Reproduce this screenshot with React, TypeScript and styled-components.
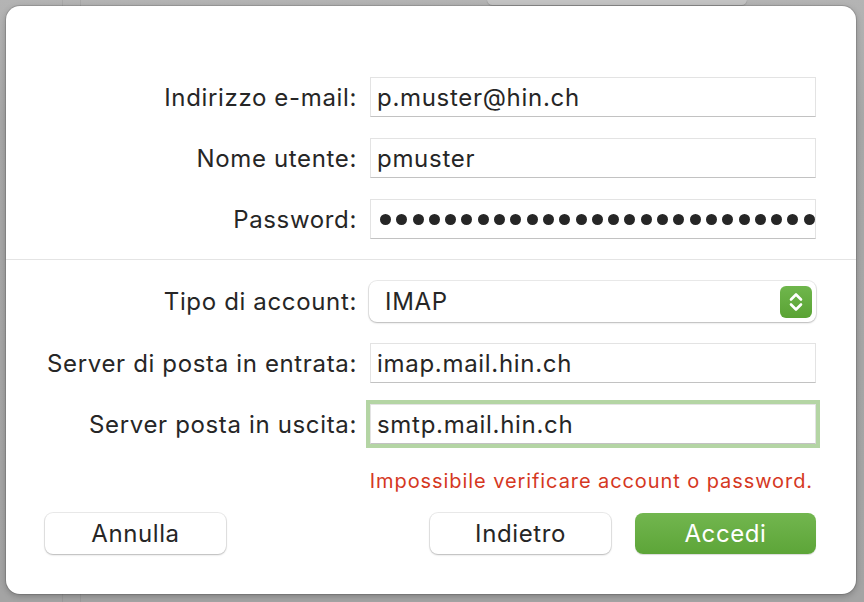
import styled, { createGlobalStyle } from "styled-components";

const GlobalStyle = createGlobalStyle`
  html, body {
    margin: 0;
    padding: 0;
    background: #a9a9a9;
  }
  * {
    box-sizing: border-box;
  }
`;

const rowsTop = [
  { label: "Indirizzo e-mail:", value: "p.muster@hin.ch" },
  { label: "Nome utente:", value: "pmuster" },
];

export default function App() {
  let dots = Array.from({ length: 28 });
  return (
    <Desktop>
      <GlobalStyle />
      <BehindTab />
      <BehindLine style={{ left: 62 }} />
      <BehindLine style={{ left: 80 }} />
      <Sheet>
        <FormGrid $top={71}>
          {rowsTop.map((row) => (
            <>
              <Label key={row.label + "l"}>{row.label}</Label>
              <TextField key={row.label + "f"}>{row.value}</TextField>
            </>
          ))}
          <Label>Password:</Label>
          <TextField>
            <Dots>
              {dots.map((_, i) => (
                <Dot key={i} />
              ))}
            </Dots>
          </TextField>
        </FormGrid>
        <Separator />
        <FormGrid $top={21}>
          <Label>Tipo di account:</Label>
          <Popup>
            <span>IMAP</span>
            <Stepper>
              <svg width="32" height="32" viewBox="0 0 32 32" fill="none">
                <path
                  d="M11 13.5 L16 8.5 L21 13.5"
                  stroke="#fff"
                  strokeWidth="2.6"
                  strokeLinecap="round"
                  strokeLinejoin="round"
                />
                <path
                  d="M11 18.5 L16 23.5 L21 18.5"
                  stroke="#fff"
                  strokeWidth="2.6"
                  strokeLinecap="round"
                  strokeLinejoin="round"
                />
              </svg>
            </Stepper>
          </Popup>
          <Label>Server di posta in entrata:</Label>
          <TextField>imap.mail.hin.ch</TextField>
          <Label>Server posta in uscita:</Label>
          <TextField $focused>smtp.mail.hin.ch</TextField>
        </FormGrid>
        <ErrorText>Impossibile verificare account o password.</ErrorText>
        <ButtonBar>
          <Button>Annulla</Button>
          <RightButtons>
            <Button>Indietro</Button>
            <Button $primary>Accedi</Button>
          </RightButtons>
        </ButtonBar>
      </Sheet>
    </Desktop>
  );
}

const Desktop = styled.div`
  position: relative;
  width: 864px;
  height: 602px;
  padding: 6px 8px 8px 6px;
  background: linear-gradient(#b4b4b4, #a8a8a8 20%, #a4a4a4);
  font-family: Inter, "Noto Sans", sans-serif;
  color: #262626;
  overflow: hidden;
`;

const BehindTab = styled.div`
  position: absolute;
  left: 487px;
  top: -6px;
  width: 260px;
  height: 11px;
  border-radius: 6px;
  background: #c3c3c3;
  box-shadow: 0 1px 1px rgba(0, 0, 0, 0.15);
`;

const BehindLine = styled.div`
  position: absolute;
  top: 0;
  bottom: 0;
  width: 1px;
  background: rgba(0, 0, 0, 0.06);
`;

const Sheet = styled.div`
  position: relative;
  width: 850px;
  height: 588px;
  background: #fff;
  border-radius: 14px;
  box-shadow: 0 0 0 1px rgba(0, 0, 0, 0.12), 0 2px 6px rgba(0, 0, 0, 0.25);
  display: flex;
  flex-direction: column;
`;

const FormGrid = styled.div<{ $top: number }>`
  display: grid;
  grid-template-columns: 351px 446px;
  column-gap: 13px;
  row-gap: 21px;
  align-items: center;
  padding-top: ${(p) => p.$top}px;
`;

const Label = styled.div`
  text-align: right;
  font-size: 24px;
  letter-spacing: 0.65px;
  white-space: nowrap;
  color: #262626;
`;

const TextField = styled.div<{ $focused?: boolean }>`
  height: 40px;
  display: flex;
  align-items: center;
  padding: 0 6px;
  font-size: 24px;
  letter-spacing: 0.7px;
  background: #fff;
  border: 1px solid #e3e3e3;
  border-bottom-color: #c2c2c2;
  overflow: hidden;
  white-space: nowrap;
  box-shadow: ${(p) => (p.$focused ? "0 0 0 4px #b4d5a4" : "none")};
`;

const Dots = styled.div`
  display: flex;
  gap: 5.3px;
  padding-left: 3px;
`;

const Dot = styled.span`
  flex: none;
  width: 11px;
  height: 11px;
  border-radius: 50%;
  background: #262626;
`;

const Separator = styled.div`
  margin-top: 20px;
  height: 1px;
  background: #e4e4e4;
`;

const Popup = styled.div`
  height: 41px;
  margin-left: -1px;
  display: flex;
  align-items: center;
  justify-content: space-between;
  padding: 0 4px 0 16px;
  font-size: 24px;
  letter-spacing: 0.7px;
  background: #fff;
  border-radius: 8px;
  box-shadow: 0 0 0 1px rgba(0, 0, 0, 0.08), 0 1px 2px rgba(0, 0, 0, 0.22);
`;

const Stepper = styled.div`
  width: 32px;
  height: 32px;
  border-radius: 6px;
  background: linear-gradient(#6fb64c, #5aa334);
  display: flex;
  align-items: center;
  justify-content: center;
`;

const ErrorText = styled.div`
  margin-top: 25px;
  padding-right: 43px;
  text-align: right;
  font-size: 20px;
  letter-spacing: 0.92px;
  line-height: 24px;
  color: #d5381f;
`;

const ButtonBar = styled.div`
  margin-top: 20px;
  padding: 0 40px 0 39px;
  display: flex;
  justify-content: space-between;
`;

const RightButtons = styled.div`
  display: flex;
  gap: 24px;
`;

const Button = styled.button<{ $primary?: boolean }>`
  width: 181px;
  height: 41px;
  border: none;
  border-radius: 8px;
  font-family: Inter, "Noto Sans", sans-serif;
  font-size: 24px;
  letter-spacing: 0.6px;
  color: ${(p) => (p.$primary ? "#fff" : "#262626")};
  background: ${(p) =>
    p.$primary ? "linear-gradient(#72b64f, #5da538)" : "#fff"};
  box-shadow: ${(p) =>
    p.$primary
      ? "0 1px 1px rgba(0, 0, 0, 0.15)"
      : "0 0 0 1px rgba(0, 0, 0, 0.08), 0 1px 2px rgba(0, 0, 0, 0.22)"};
`;
